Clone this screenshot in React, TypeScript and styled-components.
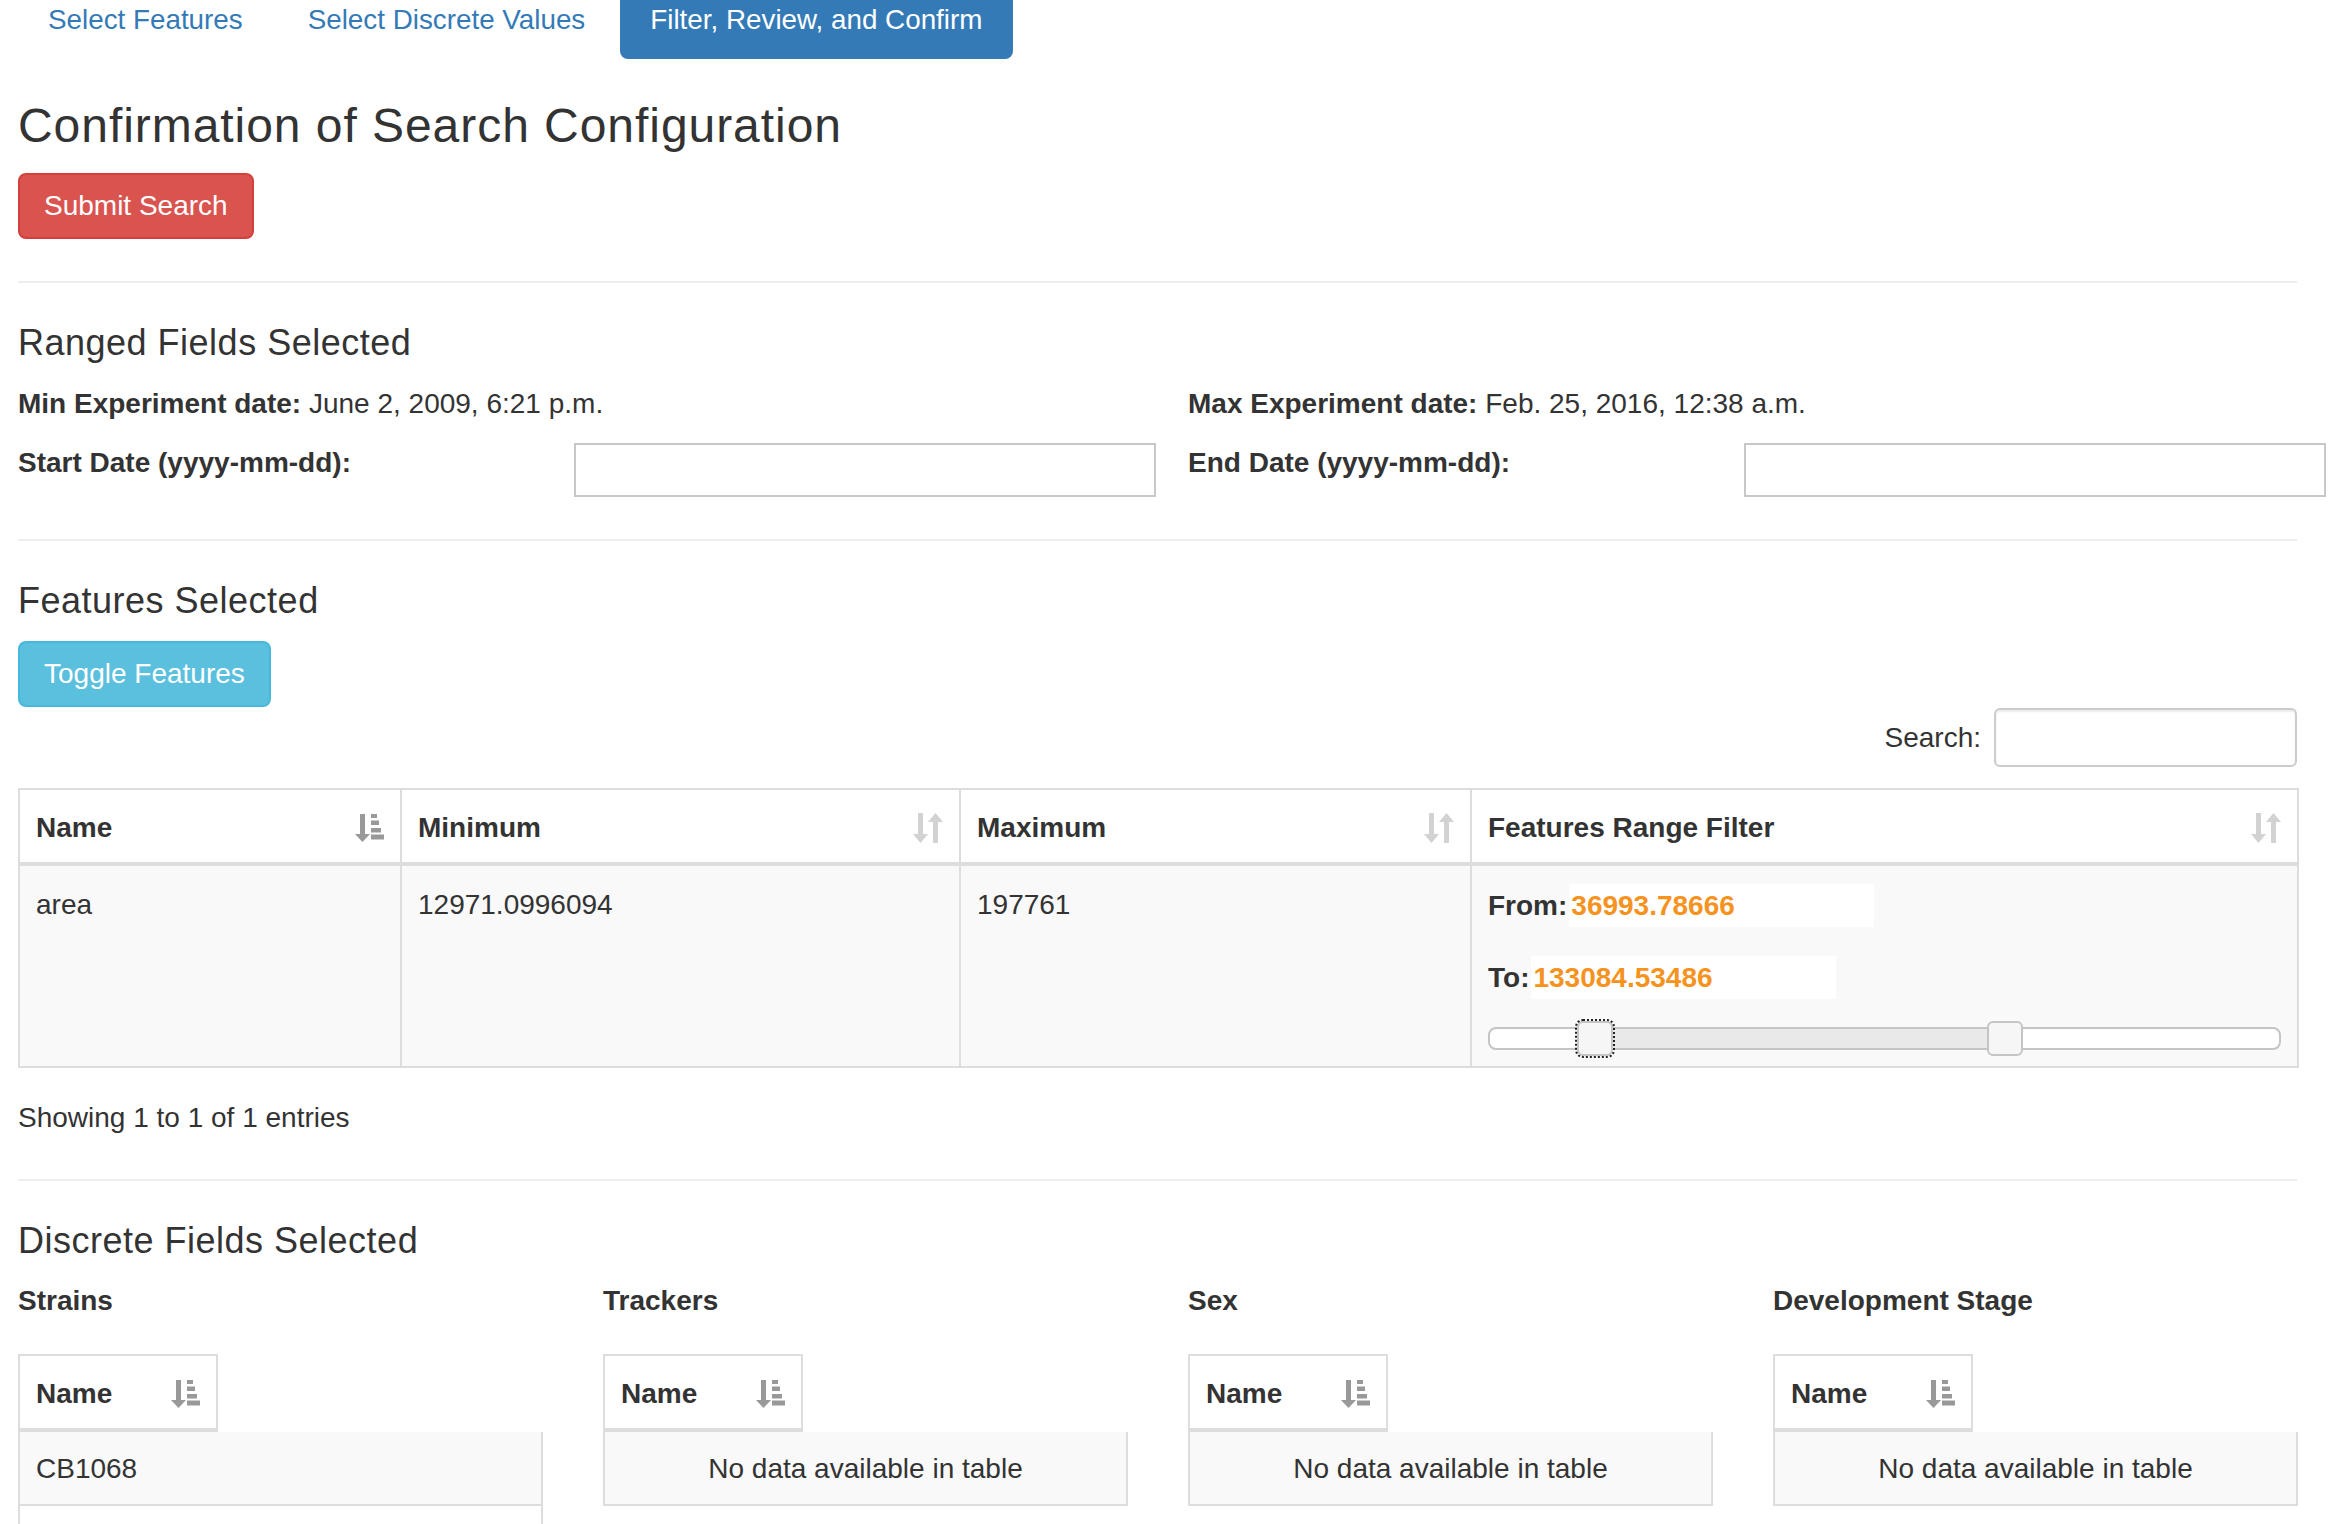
import React from 'react';
import styled, { createGlobalStyle } from 'styled-components';

const GlobalStyle = createGlobalStyle`
  html, body {
    margin: 0;
    padding: 0;
    background: #fff;
  }
  body {
    font-family: "Liberation Sans", Arial, Helvetica, sans-serif;
    font-size: 28px;
    line-height: 40px;
    color: #333;
  }
  * {
    box-sizing: border-box;
  }
`;

const Page = styled.div`
  height: 100vh;
  overflow: hidden;
  padding-left: 18px;
`;

const Content = styled.div`
  width: 2279px;
`;

const Tabs = styled.ul`
  display: flex;
  gap: 4px;
  list-style: none;
  margin: -20px 0 0;
  padding: 0;
`;

const Tab = styled.li<{ $active?: boolean }>`
  padding: 20px 31px 19px 30px;
  border-radius: 8px;
  font-size: 27.8px;
  color: ${(p) => (p.$active ? '#fff' : '#337ab7')};
  background: ${(p) => (p.$active ? '#337ab7' : 'transparent')};
  cursor: pointer;
`;

const Title = styled.h3`
  margin: 40px 0 21px;
  font-size: 48px;
  line-height: 53px;
  font-weight: 400;
  letter-spacing: 0.95px;
`;

const Button = styled.button<{ $variant: 'danger' | 'info' }>`
  display: block;
  padding: 11px 24px;
  font-family: inherit;
  font-size: 28px;
  line-height: 40px;
  color: #fff;
  border: 2px solid ${(p) => (p.$variant === 'danger' ? '#d43f3a' : '#46b8da')};
  background: ${(p) => (p.$variant === 'danger' ? '#d9534f' : '#5bc0de')};
  border-radius: 8px;
  cursor: pointer;
`;

const Divider = styled.hr<{ $top?: number }>`
  border: 0;
  border-top: 2px solid #eee;
  margin: ${(p) => p.$top ?? 41}px 0 40px;
`;

const SectionTitle = styled.h4`
  margin: 40px 0 20px;
  font-size: 36px;
  line-height: 40px;
  font-weight: 400;
  letter-spacing: 0.5px;
`;

const TwoCols = styled.div`
  display: grid;
  grid-template-columns: 1110px 1110px;
  column-gap: 60px;
`;

const InfoLine = styled.p`
  margin: 1px 0 19px;
  white-space: nowrap;
`;

const DateField = styled.div`
  display: grid;
  grid-template-columns: 556px 582px;
  align-items: start;
`;

const DateInput = styled.input`
  width: 582px;
  height: 54px;
  border: 2px solid #c8c8c8;
  font-family: inherit;
  font-size: 28px;
  padding: 0 6px;
  background: #fff;
`;

const SearchRow = styled.div`
  display: flex;
  justify-content: flex-end;
  align-items: center;
  gap: 13px;
  margin-top: 1px;
`;

const SearchInput = styled.input`
  width: 303px;
  height: 59px;
  border: 2px solid #ccc;
  border-radius: 6px;
  box-shadow: inset 0 2px 2px rgba(0, 0, 0, 0.075);
  font-family: inherit;
  font-size: 24px;
  padding: 0 20px;
`;

const DataTable = styled.table<{ $width?: string }>`
  width: ${(p) => p.$width || '100%'};
  table-layout: fixed;
  border-collapse: collapse;
`;

const MainTable = styled(DataTable)`
  margin-top: 21px;
`;

const Th = styled.th`
  border: 2px solid #ddd;
  border-bottom-width: 4px;
  padding: 18px 16px 14px;
  text-align: left;
  font-weight: bold;
  background: #fff;
`;

const ThInner = styled.div`
  display: flex;
  justify-content: space-between;
  align-items: center;
  white-space: nowrap;
`;

const Td = styled.td<{ $striped?: boolean; $center?: boolean }>`
  border: 2px solid #ddd;
  padding: 19px 16px 13px;
  vertical-align: top;
  background: ${(p) => (p.$striped ? '#f9f9f9' : '#fff')};
  text-align: ${(p) => (p.$center ? 'center' : 'left')};
`;

const RangeTd = styled(Td)`
  padding: 16px;
`;

const BodyTd = styled(Td)`
  border-top: 0;
  padding: 17px 16px 15px;
`;

const RangeLine = styled.div<{ $gap: number }>`
  display: flex;
  align-items: center;
  height: 43px;
  margin-top: ${(p) => p.$gap}px;
`;

const RangeLabel = styled.label`
  font-weight: bold;
  margin-right: 2px;
`;

const RangeValue = styled.input`
  width: 305px;
  height: 43px;
  border: 0;
  padding: 0 2px;
  background: #fff;
  color: #f6931f;
  font-family: inherit;
  font-size: 28px;
  font-weight: bold;
  outline: none;
`;

const Track = styled.div`
  position: relative;
  height: 23px;
  margin-top: 28px;
  border: 2px solid #c5c5c5;
  border-radius: 8px;
  background: #fff;
`;

const TrackRange = styled.div`
  position: absolute;
  top: 0;
  bottom: 0;
  background: #e9e9e9;
`;

const Handle = styled.span<{ $focused?: boolean }>`
  position: absolute;
  top: -8px;
  width: 36px;
  height: 35px;
  margin-left: -16px;
  background: #f6f6f6;
  border: 2px solid #c5c5c5;
  border-radius: 6px;
  outline: ${(p) => (p.$focused ? '2px dotted #222' : 'none')};
`;

const Info = styled.div`
  padding-top: 30px;
`;

const FourCols = styled.div`
  display: grid;
  grid-template-columns: repeat(4, 525px);
  column-gap: 60px;
`;

const FieldLabel = styled.div`
  font-weight: bold;
  margin-bottom: 33px;
`;

const SortActiveIcon = () => (
  <svg width="29" height="28" viewBox="0 0 29 28" fill="#999">
    <rect x="5" y="0" width="5" height="21" />
    <polygon points="0,20 15,20 7.5,28" />
    <rect x="16" y="0" width="6" height="4" />
    <rect x="16" y="6.5" width="8" height="4.5" />
    <rect x="16" y="14" width="10" height="4.5" />
    <rect x="16" y="20.5" width="13" height="5" />
  </svg>
);

const SortBothIcon = () => (
  <svg width="30" height="30" viewBox="0 0 30 30" fill="#d2d2d2">
    <rect x="5" y="0" width="5" height="22" />
    <polygon points="0,21 15,21 7.5,30" />
    <polygon points="15,9 30,9 22.5,0" />
    <rect x="20" y="8" width="5" height="22" />
  </svg>
);

const feature = {
  name: 'area',
  min: 12971.0996094,
  max: 197761,
  from: 36993.78666,
  to: 133084.53486,
};

const discreteFields = [
  { title: 'Strains', rows: ['CB1068', ''] },
  { title: 'Trackers', rows: [] as string[] },
  { title: 'Sex', rows: [] as string[] },
  { title: 'Development Stage', rows: [] as string[] },
];

const pct = (v: number) => ((v - feature.min) / (feature.max - feature.min)) * 100;

const App = () => {
  const fromPct = pct(feature.from);
  const toPct = pct(feature.to);

  return (
    <Page>
      <GlobalStyle />
      <Content>
        <Tabs>
          <Tab>Select Features</Tab>
          <Tab>Select Discrete Values</Tab>
          <Tab $active>Filter, Review, and Confirm</Tab>
        </Tabs>

        <Title>Confirmation of Search Configuration</Title>
        <Button $variant="danger">Submit Search</Button>

        <Divider $top={42} />

        <SectionTitle>Ranged Fields Selected</SectionTitle>
        <TwoCols>
          <div>
            <InfoLine>
              <b>Min Experiment date:</b> June 2, 2009, 6:21 p.m.
            </InfoLine>
            <DateField>
              <b>Start Date (yyyy-mm-dd):</b>
              <DateInput type="text" />
            </DateField>
          </div>
          <div>
            <InfoLine>
              <b>Max Experiment date:</b> Feb. 25, 2016, 12:38 a.m.
            </InfoLine>
            <DateField>
              <b>End Date (yyyy-mm-dd):</b>
              <DateInput type="text" />
            </DateField>
          </div>
        </TwoCols>

        <Divider $top={42} />

        <SectionTitle>Features Selected</SectionTitle>
        <Button $variant="info">Toggle Features</Button>

        <SearchRow>
          <span>Search:</span>
          <SearchInput type="search" />
        </SearchRow>

        <MainTable>
          <colgroup>
            <col style={{ width: 382 }} />
            <col style={{ width: 559 }} />
            <col style={{ width: 511 }} />
            <col style={{ width: 827 }} />
          </colgroup>
          <thead>
            <tr>
              <Th>
                <ThInner>
                  Name <SortActiveIcon />
                </ThInner>
              </Th>
              <Th>
                <ThInner>
                  Minimum <SortBothIcon />
                </ThInner>
              </Th>
              <Th>
                <ThInner>
                  Maximum <SortBothIcon />
                </ThInner>
              </Th>
              <Th>
                <ThInner>
                  Features Range Filter <SortBothIcon />
                </ThInner>
              </Th>
            </tr>
          </thead>
          <tbody>
            <tr>
              <Td $striped>{feature.name}</Td>
              <Td $striped>{feature.min}</Td>
              <Td $striped>{feature.max}</Td>
              <RangeTd $striped>
                <RangeLine $gap={2}>
                  <RangeLabel>From:</RangeLabel>
                  <RangeValue readOnly value={feature.from.toFixed(5)} />
                </RangeLine>
                <RangeLine $gap={29}>
                  <RangeLabel>To:</RangeLabel>
                  <RangeValue readOnly value={feature.to.toFixed(5)} />
                </RangeLine>
                <Track>
                  <TrackRange style={{ left: `${fromPct}%`, width: `${toPct - fromPct}%` }} />
                  <Handle $focused style={{ left: `${fromPct}%` }} />
                  <Handle style={{ left: `${toPct}%` }} />
                </Track>
              </RangeTd>
            </tr>
          </tbody>
        </MainTable>

        <Info>Showing 1 to 1 of 1 entries</Info>

        <Divider />

        <SectionTitle>Discrete Fields Selected</SectionTitle>
        <FourCols>
          {discreteFields.map((field) => (
            <div key={field.title}>
              <FieldLabel>{field.title}</FieldLabel>
              <DataTable $width="200px">
                <thead>
                  <tr>
                    <Th>
                      <ThInner>
                        Name <SortActiveIcon />
                      </ThInner>
                    </Th>
                  </tr>
                </thead>
              </DataTable>
              <DataTable>
                <tbody>
                  {field.rows.length === 0 ? (
                    <tr>
                      <BodyTd $striped $center>
                        No data available in table
                      </BodyTd>
                    </tr>
                  ) : (
                    field.rows.map((row, i) => (
                      <tr key={i}>
                        <BodyTd $striped={i % 2 === 0}>{row || '\u00a0'}</BodyTd>
                      </tr>
                    ))
                  )}
                </tbody>
              </DataTable>
            </div>
          ))}
        </FourCols>
      </Content>
    </Page>
  );
};

export default App;
